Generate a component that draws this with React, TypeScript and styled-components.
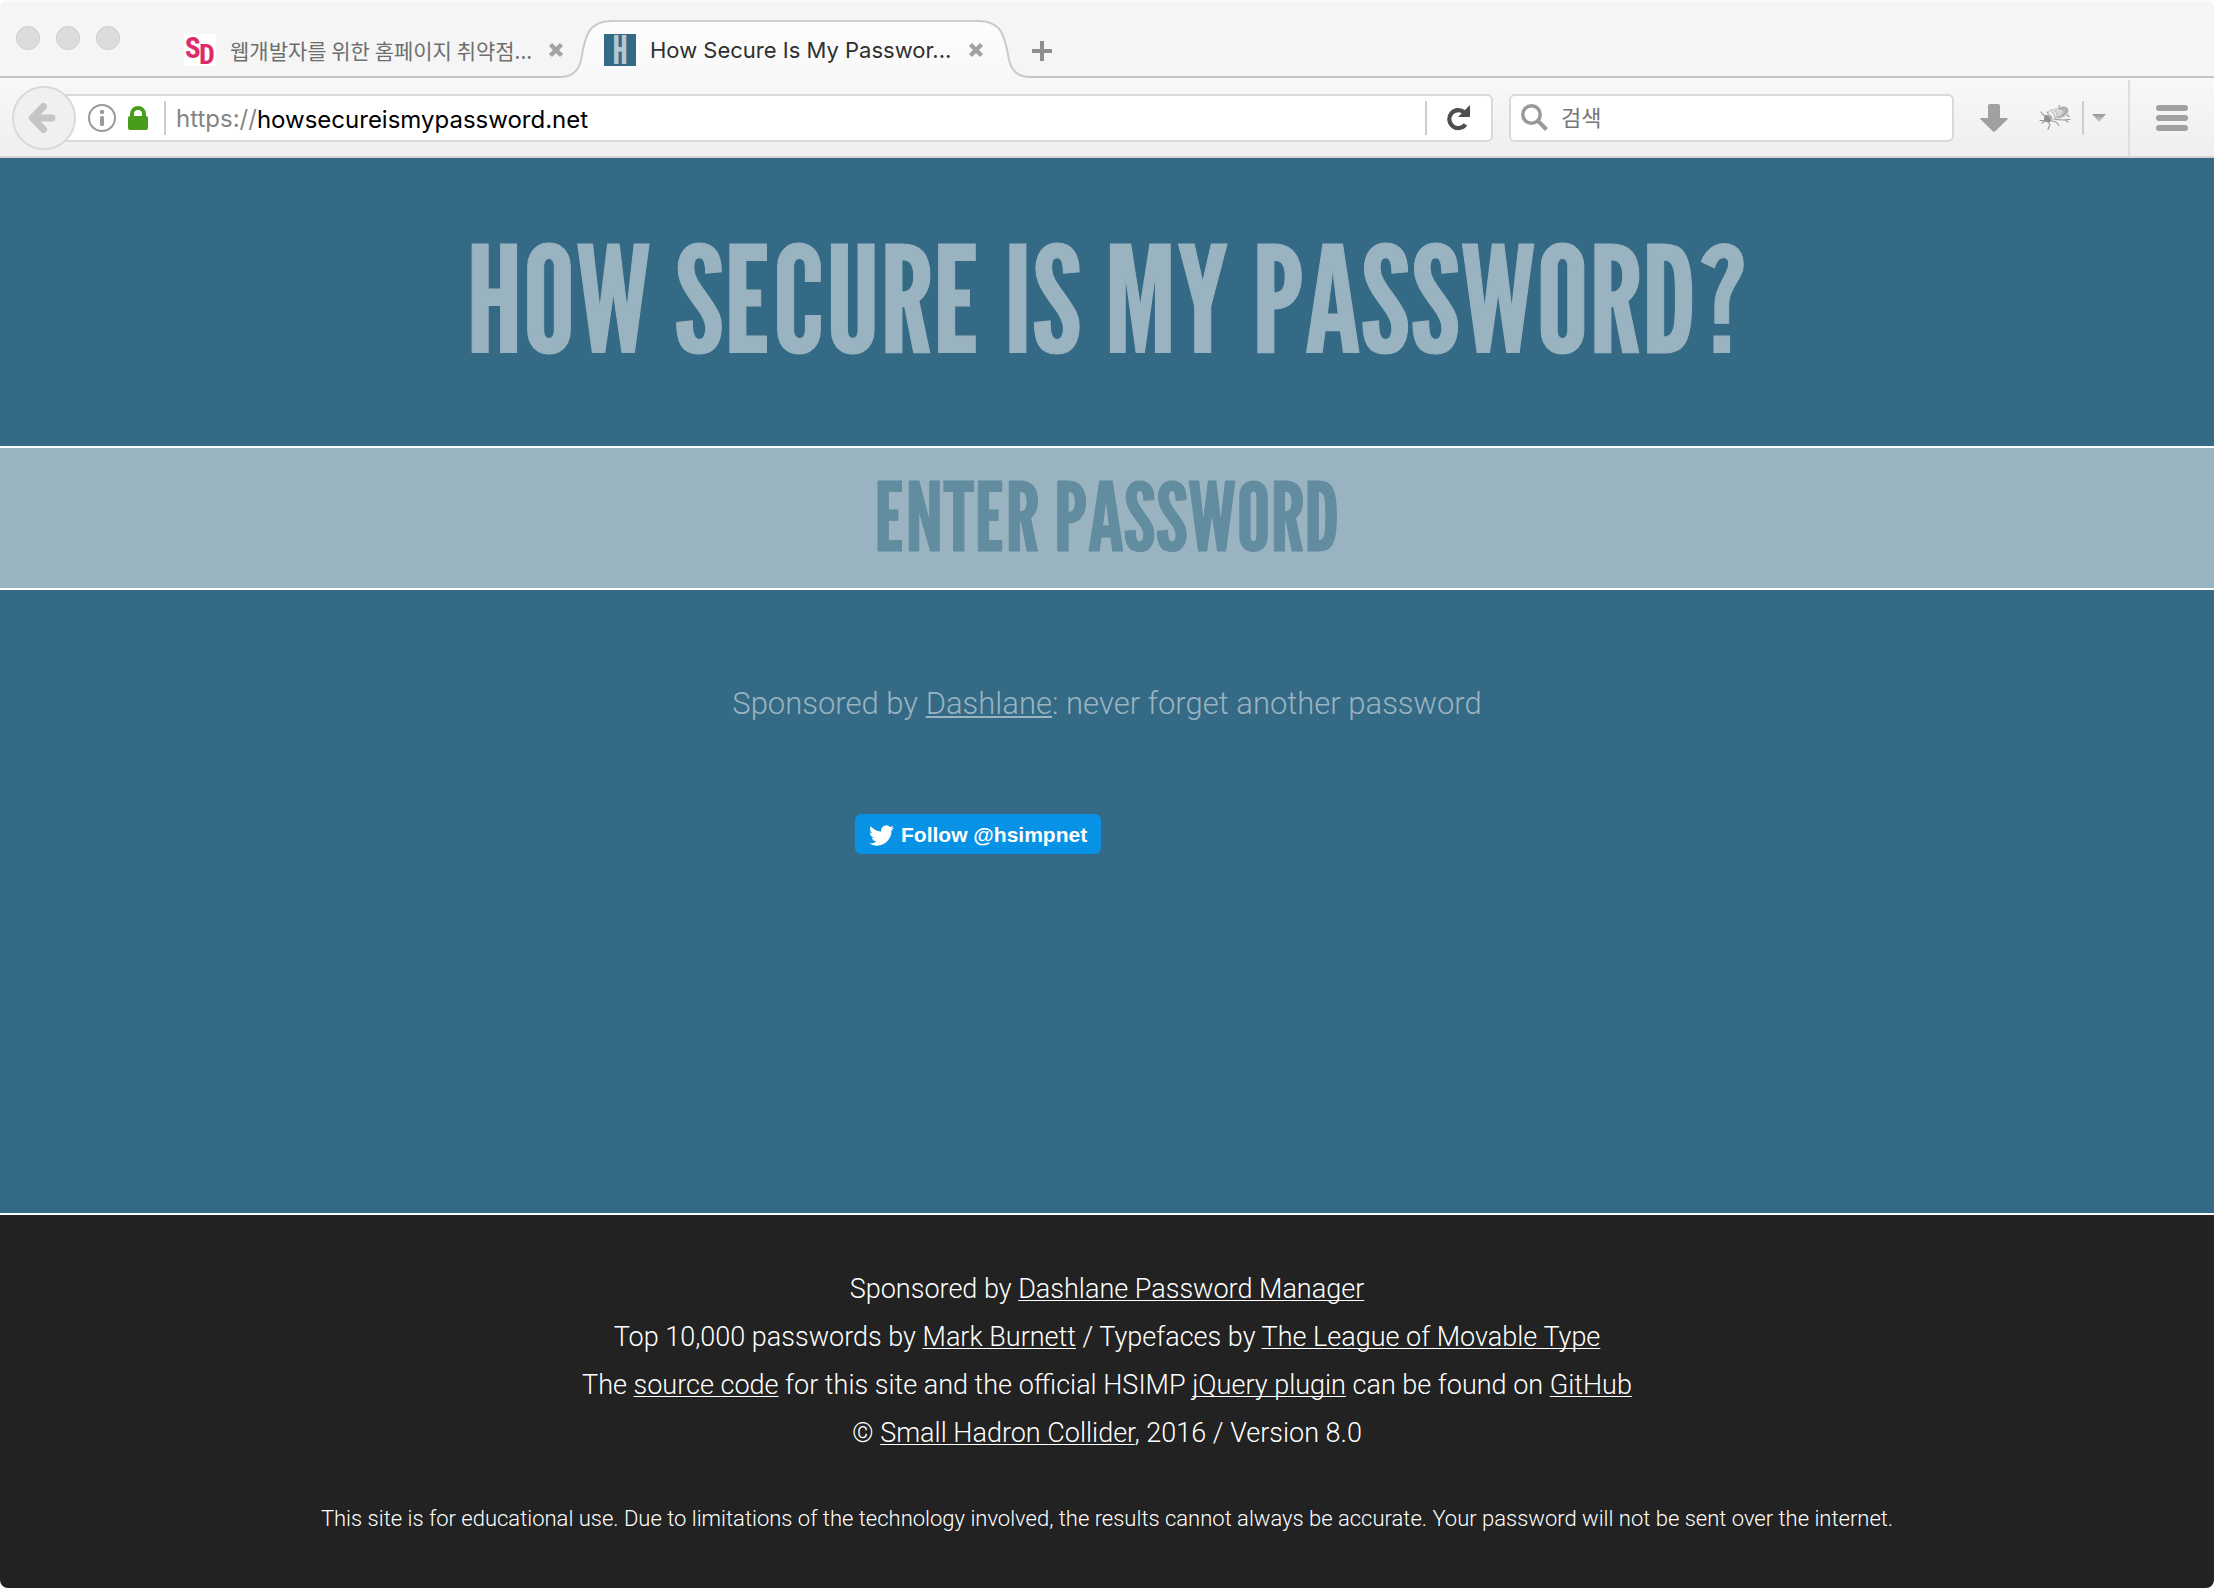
import React, { useState } from 'react';
import styled, { createGlobalStyle } from 'styled-components';

const color = {
  blue: '#346a85',
  pale: '#9ab3c0',
  placeholder: '#628c9f',
  dark: '#222222',
  twitter: '#0892e5',
  icon: '#a0a0a0',
  border: '#d9d9d9',
};

const uiFont = 'Inter, "Noto Sans CJK KR", sans-serif';
const koreanFont = '"Noto Sans CJK KR", sans-serif';
const bodyFont = 'Roboto, "Liberation Sans", sans-serif';
const displayFont = '"League Gothic", "Open Sans Condensed", "Roboto Condensed", sans-serif';

const GlobalStyle = createGlobalStyle`
  * { box-sizing: border-box; }
  body { margin: 0; background: #fff; }
  button, input { font: inherit; margin: 0; padding: 0; border: 0; background: none; outline: 0; }
  button { cursor: pointer; display: flex; align-items: center; }
  svg { display: block; flex: none; }
`;

const Window = styled.div`
  display: flex;
  flex-direction: column;
  min-height: 100vh;
  border-radius: 8px;
  overflow: hidden;
`;

/* ---------- Tab strip ---------- */

const TabStrip = styled.header`
  display: flex;
  align-items: center;
  height: 78px;
  padding-left: 16px;
  background: linear-gradient(#fdfdfd, #f5f5f5 2px);
  border-bottom: 2px solid #c6c6c6;
  font-family: ${uiFont};
`;

const WindowButtons = styled.div`
  display: flex;
  gap: 16px;
  margin-right: 64px;
`;

const WindowButton = styled.button`
  width: 24px;
  height: 24px;
  border: 1px solid #cdcdcd;
  border-radius: 50%;
  background: #dcdcdc;
`;

const Tab = styled.div<{ $active?: boolean }>`
  position: relative;
  display: flex;
  align-items: center;
  align-self: flex-end;
  gap: 14px;
  flex: 0 1 ${(p) => (p.$active ? 470 : 380)}px;
  min-width: 0;
  height: 58px;
  margin-bottom: -2px;
  margin-left: ${(p) => (p.$active ? '-4px' : '0')};
  padding: ${(p) => (p.$active ? '2px 46px 0 44px' : '2px 0 0')};
  color: ${(p) => (p.$active ? '#303030' : '#6e6e6e')};
  font-family: ${(p) => (p.$active ? uiFont : koreanFont)};
  font-size: ${(p) => (p.$active ? 22 : 21)}px;
`;

const TabShape = styled.div`
  position: absolute;
  inset: 0;
  display: flex;
`;

const TabTop = styled.div`
  flex: 1;
  border-top: 2px solid #cfcfcf;
  background: linear-gradient(#fdfdfd, #f8f8f8);
`;

const TabTitle = styled.span`
  position: relative;
  flex: 1;
  min-width: 0;
  white-space: nowrap;
  line-height: 32px;
`;

const TabIcon = styled.svg`
  position: relative;
  width: 32px;
  height: 32px;
  overflow: visible;
`;

const TabButton = styled.button`
  position: relative;
`;

const NewTab = styled.button`
  align-self: flex-end;
  height: 58px;
  margin: 0 0 -2px 2px;
  padding-top: 4px;
`;

/* ---------- Navigation bar ---------- */

const NavBar = styled.nav`
  display: flex;
  align-items: center;
  height: 80px;
  padding: 2px 0 0 12px;
  background: linear-gradient(#f8f8f8, #efefef);
  border-bottom: 2px solid #d4d4d4;
  font-family: ${uiFont};
`;

const BackButton = styled.button`
  z-index: 1;
  flex: none;
  justify-content: center;
  width: 64px;
  height: 64px;
  padding-right: 4px;
  border: 2px solid ${color.border};
  border-radius: 50%;
  background: #f0f0f0;
`;

const Field = styled.div`
  display: flex;
  align-items: center;
  height: 48px;
  min-width: 0;
  border: 2px solid ${color.border};
  border-radius: 6px;
  background: #fff;
`;

const AddressField = styled(Field)`
  flex: 1;
  margin-left: -16px;
  padding: 0 20px 0 26px;
`;

const SearchField = styled(Field)`
  flex: 0 1 445px;
  gap: 12px;
  margin-left: 16px;
  padding: 0 10px;
`;

const SiteIcons = styled.div`
  display: flex;
  align-items: center;
  gap: 12px;
`;

const Rule = styled.span<{ $before: number; $after: number }>`
  flex: none;
  width: 2px;
  height: 34px;
  margin: 0 ${(p) => p.$after}px 0 ${(p) => p.$before}px;
  background: #cdcdcd;
`;

const Scheme = styled.label`
  padding-top: 2px;
  color: #858585;
  font-size: 24px;
  line-height: 32px;
`;

const AddressInput = styled.input`
  flex: 1;
  min-width: 0;
  height: 34px;
  padding-top: 2px;
  color: #000;
  font-size: 24px;
`;

const SearchInput = styled.input`
  flex: 1;
  min-width: 0;
  height: 34px;
  font-size: 22px;
  &::placeholder { color: #757575; opacity: 1; }
`;

const Tools = styled.div`
  display: flex;
  align-items: center;
  align-self: stretch;
  margin-left: 26px;
`;

const BugButton = styled.button`
  margin-left: 31px;
`;

const MenuButton = styled.button`
  align-self: stretch;
  margin-left: 22px;
  padding: 0 26px;
  border-left: 2px solid #dedede;
`;

/* ---------- Page ---------- */

const Main = styled.main`
  flex: 1;
  background: ${color.blue};
  color: ${color.pale};
  text-align: center;
`;

const Title = styled.h1`
  margin: 0;
  padding: 61px 0 67px;
  font: 400 148px/160px ${displayFont};
  -webkit-text-stroke: 1px currentColor;
`;

const PasswordForm = styled.form`
  display: flex;
  border: solid #fff;
  border-width: 2px 0;
  background: ${color.pale};
`;

const PasswordInput = styled.input`
  flex: 1;
  min-width: 0;
  height: 140px;
  padding-bottom: 4px;
  color: ${color.blue};
  font: 400 95px/136px ${displayFont};
  -webkit-text-stroke: 1px currentColor;
  text-align: center;
  &::placeholder { color: ${color.placeholder}; opacity: 1; }
`;

const Sponsor = styled.p`
  margin: 90px 0 86px;
  font: 300 31px/48px ${bodyFont};
`;

const Link = styled.a<{ $line: number }>`
  color: inherit;
  text-decoration: underline;
  text-decoration-thickness: ${(p) => p.$line}px;
  text-underline-offset: 2px;
  text-decoration-skip-ink: none;
`;

const Social = styled.div`
  display: flex;
  width: 504px;
  max-width: 100%;
  margin: 0 auto;
`;

const FollowLink = styled.a`
  display: flex;
  align-items: center;
  gap: 7px;
  height: 40px;
  padding: 2px 14px 0;
  border-radius: 6px;
  background: ${color.twitter};
  color: #fff;
  font: 700 21px/38px "Liberation Sans", sans-serif;
  text-decoration: none;
`;

const Footer = styled.footer`
  padding: 50px 20px 45px;
  border-top: 2px solid #fff;
  background: ${color.dark};
  color: #fff;
  font: 300 27px/48px ${bodyFont};
  text-align: center;
`;

const Credit = styled.p`
  margin: 0;
`;

const Notice = styled.p`
  margin: 38px 0 0;
  font-size: 22px;
`;

/* ---------- Icons ---------- */

const CloseIcon = () => (
  <svg width="16" height="16" viewBox="0 0 16 16">
    <path d="M2.5 2.5l11 11M13.5 2.5l-11 11" stroke="#a3a3a3" strokeWidth="4.4" />
  </svg>
);

const PlusIcon = () => (
  <svg width="20" height="20" viewBox="0 0 20 20">
    <path d="M10 0v20M0 10h20" stroke="#8e8e8e" strokeWidth="4" />
  </svg>
);

const BackIcon = () => (
  <svg width="28" height="32" viewBox="0 0 28 32">
    <path d="M15.500 4.500L4.500 16l11 11.500M6 16h18" fill="none" stroke="#c5c5c5" strokeWidth="7" strokeLinecap="round" strokeLinejoin="round" />
    <path d="M0.300 16l5-5v10z" fill="#c5c5c5" />
  </svg>
);

const InfoIcon = () => (
  <svg width="28" height="28" viewBox="0 0 28 28">
    <circle cx="14" cy="14" r="13" fill="none" stroke="#999" strokeWidth="2" />
    <circle cx="14" cy="8" r="2.200" fill="#999" />
    <rect x="12" y="12" width="4" height="10" rx="1.500" fill="#999" />
  </svg>
);

const LockIcon = () => (
  <svg width="20" height="24" viewBox="0 0 20 24">
    <path d="M4 13V8a6 6 0 0 1 12 0v5" fill="none" stroke="#4a9c1c" strokeWidth="4" />
    <rect y="10" width="20" height="14" rx="2" fill="#4a9c1c" />
  </svg>
);

const ReloadIcon = () => (
  <svg width="24" height="26" viewBox="0 0 24 26">
    <path d="M17.500 7.500A9 9 0 1 0 18.500 19.500" fill="none" stroke="#4d4d4d" strokeWidth="4.200" />
    <path d="M23 0v12H11z" fill="#4d4d4d" />
  </svg>
);

const SearchIcon = () => (
  <svg width="28" height="28" viewBox="0 0 28 28">
    <circle cx="10.500" cy="10.500" r="8.700" fill="none" stroke="#999" strokeWidth="3.500" />
    <path d="M16.500 16.500l9 9" stroke="#999" strokeWidth="4" />
  </svg>
);

const DownloadIcon = () => (
  <svg width="28" height="28" viewBox="0 0 28 28">
    <path d="M10 0h8q2 0 2 2v12h7q1.500 0 .5 1.200L15 27.500q-1 .8-2 0L.5 15.200Q-.5 14 1 14h7V2q0-2 2-2z" fill={color.icon} />
  </svg>
);

const BugIcon = () => (
  <svg width="32" height="26" viewBox="0 0 32 26">
    <g fill="none" stroke="#949494" strokeWidth="1.100" strokeLinecap="round" strokeLinejoin="round">
      <path d="M6 11L4 9.500 2 7M5 15.500H1M6 16l-3 2M9 17l2 2.500-2 5M13 16l4 1 3 3.500M16 14.500l8 .5 7-.5M26 15l3 2M10 8L8 7M21 2l-1-1.500M28 10l2 1.500" />
    </g>
    <ellipse cx="20" cy="8" rx="10" ry="5.800" transform="rotate(-18 20 8)" fill="#d6d6d6" />
    <path d="M18 4q6-4 10-1.500 3 3-.5 7-4 3.500-10 3 6-2 6.500-5.500-1-3-6-3z" fill="#bcbcbc" />
    <path d="M22 3.500q4-2 5.500.5 0 4-4.500 7M19 12q3-.5 6-2M20 3l2 1M28 6l1 1" fill="none" stroke="#989898" strokeWidth=".9" />
    <ellipse cx="13.500" cy="9.500" rx="4.200" ry="5" transform="rotate(-35 13.500 9.500)" fill="#eee" stroke="#b2b2b2" strokeWidth=".8" />
    <path d="M12 6q4 2 4.500 7" fill="none" stroke="#a9a9a9" strokeWidth="1" />
    <ellipse cx="9" cy="13.500" rx="4" ry="3.800" fill="#8f8f8f" />
    <path d="M8 10.500q3.500 0 4.500 4.500" fill="none" stroke="#c4c4c4" strokeWidth="1.200" />
  </svg>
);

const CaretIcon = () => (
  <svg width="14" height="8" viewBox="0 0 14 8">
    <defs>
      <linearGradient id="caret" x1="0" y1="0" x2="0" y2="1">
        <stop offset="0" stopColor="#989898" />
        <stop offset="1" stopColor="#cfcfcf" />
      </linearGradient>
    </defs>
    <path d="M0 0h14L7 8z" fill="url(#caret)" />
  </svg>
);

const MenuIcon = () => (
  <svg width="32" height="26" viewBox="0 0 32 26" fill={color.icon}>
    <rect width="32" height="6" rx="3" />
    <rect y="10" width="32" height="6" rx="3" />
    <rect y="20" width="32" height="6" rx="3" />
  </svg>
);

const TwitterIcon = () => (
  <svg width="25" height="25" viewBox="0 0 24 24" fill="#fff">
    <path d="M23.954 4.569a10 10 0 0 1-2.825.775 4.958 4.958 0 0 0 2.163-2.723 9.990 9.990 0 0 1-3.127 1.184 4.920 4.920 0 0 0-8.384 4.482C7.691 8.094 4.066 6.130 1.640 3.161a4.822 4.822 0 0 0-.666 2.475c0 1.710.87 3.213 2.188 4.096a4.904 4.904 0 0 1-2.228-.616v.061a4.923 4.923 0 0 0 3.946 4.827 4.996 4.996 0 0 1-2.212.085 4.937 4.937 0 0 0 4.604 3.417 9.868 9.868 0 0 1-6.102 2.105c-.39 0-.779-.023-1.170-.067a13.995 13.995 0 0 0 7.557 2.209c9.054 0 13.999-7.496 13.999-13.986 0-.209 0-.42-.015-.63a9.936 9.936 0 0 0 2.460-2.548z" />
  </svg>
);

const DeveloperFavicon = () => (
  <TabIcon viewBox="0 0 32 32">
    <rect width="32" height="32" fill="#fff" />
    <g fill="#de2a68" fontFamily="Roboto Condensed, sans-serif" fontWeight="700">
      <text x="1" y="24" fontSize="29">S</text>
      <text x="15" y="30" fontSize="28">D</text>
    </g>
  </TabIcon>
);

const PasswordFavicon = () => (
  <TabIcon viewBox="0 0 32 32">
    <rect width="32" height="32" fill={color.blue} />
    <text x="16" y="30" textAnchor="middle" fill="#b3c8d3" fontFamily="League Gothic, sans-serif" fontSize="40">H</text>
  </TabIcon>
);

const tabEdge = 'M0 57C13 57 19 49 21 40C25 18 27 1 52 1';

const TabEdge = ({ side }: { side: 'left' | 'right' }) => (
  <svg width="52" height="58" viewBox="0 0 52 58">
    <defs>
      <linearGradient id={`edge-${side}`} x1="0" y1="0" x2="0" y2="1">
        <stop offset="0" stopColor="#fdfdfd" />
        <stop offset="1" stopColor="#f8f8f8" />
      </linearGradient>
    </defs>
    <g transform={side === 'right' ? 'matrix(-1 0 0 1 52 0)' : undefined}>
      <path d={`${tabEdge}V58H0z`} fill={`url(#edge-${side})`} />
      <path d={tabEdge} fill="none" stroke="#cbcbcb" strokeWidth="2" />
    </g>
  </svg>
);

export default function App() {
  const [address, setAddress] = useState('howsecureismypassword.net');
  const [query, setQuery] = useState('');
  const [password, setPassword] = useState('');

  return (
    <>
      <GlobalStyle />
      <Window>
        <TabStrip>
          <WindowButtons>
            <WindowButton aria-label="Close window" />
            <WindowButton aria-label="Minimize window" />
            <WindowButton aria-label="Zoom window" />
          </WindowButtons>
          <Tab>
            <DeveloperFavicon />
            <TabTitle>웹개발자를 위한 홈페이지 취약점...</TabTitle>
            <TabButton aria-label="Close tab"><CloseIcon /></TabButton>
          </Tab>
          <Tab $active>
            <TabShape>
              <TabEdge side="left" />
              <TabTop />
              <TabEdge side="right" />
            </TabShape>
            <PasswordFavicon />
            <TabTitle>How Secure Is My Passwor...</TabTitle>
            <TabButton aria-label="Close tab"><CloseIcon /></TabButton>
          </Tab>
          <NewTab aria-label="New tab"><PlusIcon /></NewTab>
        </TabStrip>

        <NavBar>
          <BackButton aria-label="Back"><BackIcon /></BackButton>
          <AddressField>
            <SiteIcons>
              <InfoIcon />
              <LockIcon />
            </SiteIcons>
            <Rule $before={16} $after={10} />
            <Scheme htmlFor="address">https://</Scheme>
            <AddressInput id="address" value={address} onChange={(e) => setAddress(e.target.value)} />
            <Rule $before={16} $after={20} />
            <button aria-label="Reload"><ReloadIcon /></button>
          </AddressField>
          <SearchField>
            <SearchIcon />
            <SearchInput aria-label="검색" placeholder="검색" value={query} onChange={(e) => setQuery(e.target.value)} />
          </SearchField>
          <Tools>
            <button aria-label="Downloads"><DownloadIcon /></button>
            <BugButton aria-label="Firebug"><BugIcon /></BugButton>
            <Rule $before={11} $after={8} />
            <button aria-label="Firebug options"><CaretIcon /></button>
            <MenuButton aria-label="Menu"><MenuIcon /></MenuButton>
          </Tools>
        </NavBar>

        <Main>
          <Title>HOW SECURE IS MY PASSWORD?</Title>
          <PasswordForm onSubmit={(e) => e.preventDefault()}>
            <PasswordInput
              type="password"
              aria-label="Enter password"
              placeholder="ENTER PASSWORD"
              value={password}
              onChange={(e) => setPassword(e.target.value)}
            />
          </PasswordForm>
          <Sponsor>
            Sponsored by <Link $line={2} href="#dashlane">Dashlane</Link>: never forget another password
          </Sponsor>
          <Social>
            <FollowLink href="#hsimpnet">
              <TwitterIcon />
              Follow @hsimpnet
            </FollowLink>
          </Social>
        </Main>

        <Footer>
          <Credit>
            Sponsored by <Link $line={1} href="#manager">Dashlane Password Manager</Link>
          </Credit>
          <Credit>
            Top 10,000 passwords by <Link $line={1} href="#burnett">Mark Burnett</Link> / Typefaces by{' '}
            <Link $line={1} href="#league">The League of Movable Type</Link>
          </Credit>
          <Credit>
            The <Link $line={1} href="#source">source code</Link> for this site and the official HSIMP{' '}
            <Link $line={1} href="#jquery">jQuery plugin</Link> can be found on{' '}
            <Link $line={1} href="#github">GitHub</Link>
          </Credit>
          <Credit>
            © <Link $line={1} href="#collider">Small Hadron Collider</Link>, 2016 / Version 8.0
          </Credit>
          <Notice>
            This site is for educational use. Due to limitations of the technology involved, the results cannot
            always be accurate. Your password will not be sent over the internet.
          </Notice>
        </Footer>
      </Window>
    </>
  );
}
